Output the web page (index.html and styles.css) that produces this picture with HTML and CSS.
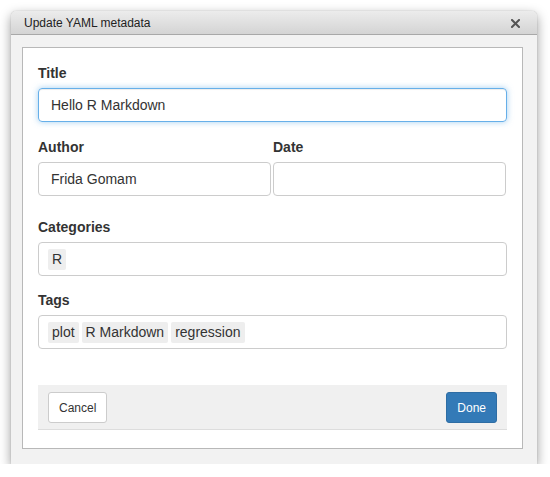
FILE: index.html
```html
<!DOCTYPE html>
<html>
<head>
<meta charset="utf-8">
<link rel="stylesheet" href="styles.css">
</head>
<body>
<div class="window">
  <div class="titlebar">
    <span class="wtitle">Update YAML metadata</span>
    <svg class="close" width="9" height="9" viewBox="0 0 9 9"><path d="M1 1L8 8M8 1L1 8" stroke="#555" stroke-width="2" stroke-linecap="square"/></svg>
  </div>
  <div class="wbody">
    <div class="panel">
      <div class="field">
        <label class="lbl">Title</label>
        <div class="input focus">Hello R Markdown</div>
      </div>
      <div class="row">
        <div class="field">
          <label class="lbl">Author</label>
          <div class="input">Frida Gomam</div>
        </div>
        <div class="field">
          <label class="lbl">Date</label>
          <div class="input"></div>
        </div>
      </div>
      <div class="field cats">
        <label class="lbl">Categories</label>
        <div class="input tags"><span class="chip">R</span></div>
      </div>
      <div class="field tagf">
        <label class="lbl">Tags</label>
        <div class="input tags"><span class="chip">plot</span><span class="chip">R Markdown</span><span class="chip">regression</span></div>
      </div>
      <div class="footer">
        <button class="btn">Cancel</button>
        <button class="btn primary">Done</button>
      </div>
    </div>
  </div>
</div>
</body>
</html>
```

FILE: styles.css
```css
html, body {
  margin: 0;
  background: #ffffff;
}
body {
  padding: 11px 0 0 11px;
  font-family: "Liberation Sans", Arial, sans-serif;
  color: #333;
}
.window {
  width: 526px;
  border-radius: 5px 5px 0 0;
  box-shadow: 0 4px 12px rgba(0,0,0,0.4), 0 0 1px rgba(0,0,0,0.35);
  display: flex;
  flex-direction: column;
  background: #f2f2f2;
}
.titlebar {
  height: 23px;
  border-bottom: 1px solid #a8a8a8;
  border-radius: 5px 5px 0 0;
  background: linear-gradient(#ececec, #d4d4d4);
  display: flex;
  align-items: center;
  justify-content: space-between;
  padding: 0 17px 0 13px;
}
.wtitle {
  font-size: 12px;
  color: #222;
  padding-top: 1px;
}
.close {
  display: block;
  margin-top: 1px;
}
.wbody {
  padding: 12px 14px 15px 11px;
}
.panel {
  background: #fff;
  border: 1px solid #b8b8b8;
  padding: 15px 15px 18px 15px;
}
.lbl {
  display: block;
  font-weight: bold;
  font-size: 14px;
  line-height: 20px;
  margin-bottom: 5px;
  color: #333;
}
.input {
  box-sizing: border-box;
  height: 34px;
  border: 1px solid #ccc;
  border-radius: 4px;
  padding: 0 12px;
  font-size: 14px;
  line-height: 32px;
  color: #333;
}
.input.focus {
  border-color: #66afe9;
  box-shadow: inset 0 1px 1px rgba(0,0,0,0.075), 0 0 6px rgba(102,175,233,0.6);
}
.row {
  display: grid;
  grid-template-columns: 233px 233px;
  column-gap: 2px;
  margin-top: 15px;
}
.cats {
  margin-top: 21px;
}
.tagf {
  margin-top: 14px;
}
.input.tags {
  display: flex;
  align-items: center;
  gap: 3px;
  padding: 0 9px;
}
.chip {
  background: #eee;
  border-radius: 2px;
  padding: 0 4px;
  height: 21px;
  line-height: 21px;
  font-size: 14px;
  color: #333;
}
.footer {
  margin-top: 36px;
  background: #f0f0f0;
  border-bottom: 1px solid #ddd;
  padding: 7px 10px 6px 10px;
  display: flex;
  justify-content: space-between;
}
.btn {
  height: 31px;
  padding: 0 10px;
  font-family: "Liberation Sans", Arial, sans-serif;
  font-size: 12px;
  color: #333;
  background: #fff;
  border: 1px solid #ccc;
  border-radius: 3px;
}
.btn.primary {
  background: #337ab7;
  border-color: #2e6da4;
  color: #fff;
}
```
